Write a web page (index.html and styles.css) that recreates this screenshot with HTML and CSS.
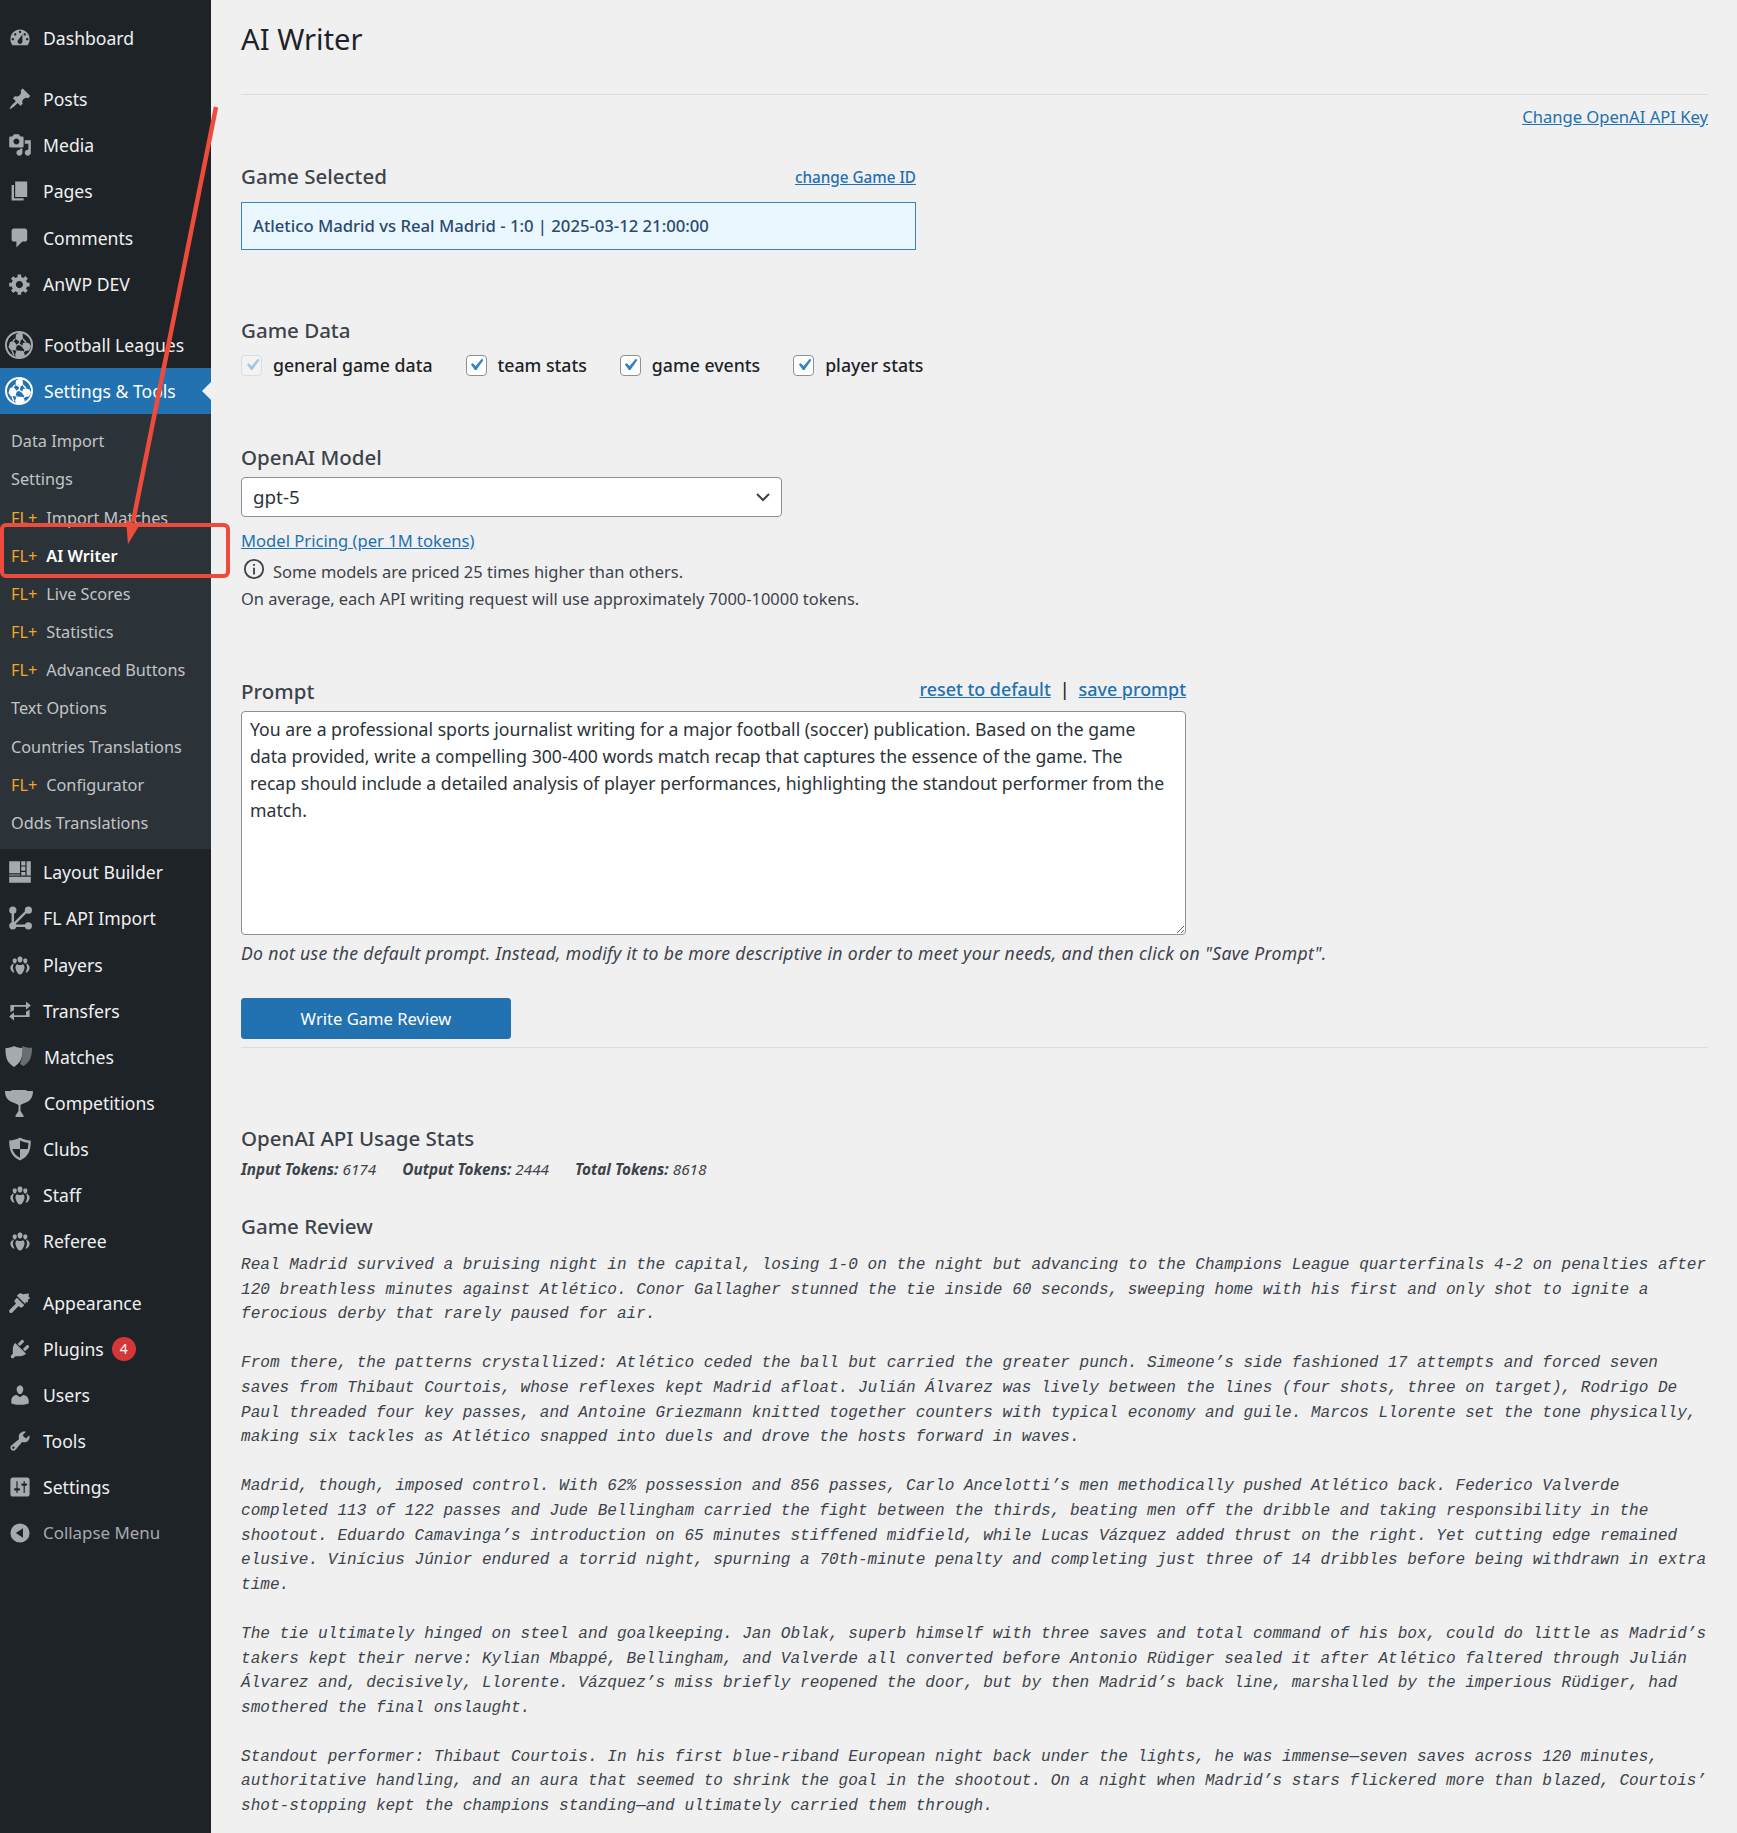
FILE: index.html
```html
<!DOCTYPE html>
<html lang="en">
  <head>
    <meta charset="UTF-8" />
    <title>AI Writer</title>
    <link rel="stylesheet" href="styles.css">
  </head>
  <body>
    <svg class="sprite" xmlns="http://www.w3.org/2000/svg">
      <symbol id="i-dashboard" viewBox="0 0 20 20"><path fill-rule="evenodd" d="M3.76 16h12.48c1.1-1.37 1.76-3.11 1.76-5 0-4.42-3.58-8-8-8s-8 3.58-8 8c0 1.89.66 3.63 1.76 5zM10 4c.55 0 1 .45 1 1s-.45 1-1 1-1-.45-1-1 .45-1 1-1zM6 6c.55 0 1 .45 1 1s-.45 1-1 1-1-.45-1-1 .45-1 1-1zm8 0c.55 0 1 .45 1 1s-.45 1-1 1-1-.45-1-1 .45-1 1-1zm-5.37 5.55L12 7v6c0 1.1-.9 2-2 2s-2-.9-2-2c0-.57.24-1.08.63-1.45zM4 10c.55 0 1 .45 1 1s-.45 1-1 1-1-.45-1-1 .45-1 1-1zm12 0c.55 0 1 .45 1 1s-.45 1-1 1-1-.45-1-1 .45-1 1-1z"/></symbol>
      <symbol id="i-post" viewBox="0 0 20 20"><path d="M10.44 3.02l1.82-1.82 6.36 6.35-1.83 1.82c-1.05-.68-2.48-.57-3.41.36l-.75.75c-.92.93-1.04 2.35-.35 3.41l-1.83 1.82-2.41-2.41-2.8 2.79c-.42.42-3.38 2.71-3.8 2.29s1.86-3.39 2.28-3.81l2.79-2.79L4.1 9.36l1.83-1.82c1.05.69 2.48.57 3.4-.36l.75-.75c.93-.92 1.05-2.35.36-3.41z"/></symbol>
      <symbol id="i-media" viewBox="0 0 20 20"><path fill-rule="evenodd" d="M13 11V4c0-.55-.45-1-1-1h-1.67L9 1H5L3.67 3H2c-.55 0-1 .45-1 1v7c0 .55.45 1 1 1h10c.55 0 1-.45 1-1zM7 4.5c1.38 0 2.5 1.12 2.5 2.5S8.38 9.5 7 9.5 4.5 8.38 4.5 7 5.62 4.5 7 4.5zM14 6h5v10.5c0 1.38-1.12 2.5-2.5 2.5S14 17.88 14 16.5s1.12-2.5 2.5-2.5c.17 0 .34.02.5.05V9h-3V6zm-4 8.05V13h2v3.5c0 1.38-1.12 2.5-2.5 2.5S7 17.88 7 16.5 8.12 14 9.5 14c.17 0 .34.02.5.05z"/></symbol>
      <symbol id="i-page" viewBox="0 0 20 20"><path d="M6 15V2h10v13H6zm-1 1h8v2H3V5h2v11z"/></symbol>
      <symbol id="i-comments" viewBox="0 0 20 20"><path d="M5 2h9c1.1 0 2 .9 2 2v7c0 1.1-.9 2-2 2h-2l-5 5v-5H5c-1.1 0-2-.9-2-2V4c0-1.1.9-2 2-2z"/></symbol>
      <symbol id="i-gear" viewBox="0 0 20 20"><path fill-rule="evenodd" d="M18 12h-2.18c-.17.7-.44 1.35-.81 1.93l1.54 1.54-2.1 2.1-1.54-1.54c-.58.36-1.23.63-1.91.79V19H8v-2.18c-.68-.16-1.33-.43-1.91-.79l-1.54 1.54-2.12-2.12 1.54-1.54c-.36-.58-.63-1.23-.79-1.91H1V9.03h2.17c.16-.7.44-1.36.8-1.94L2.43 5.55l2.1-2.1 1.54 1.54c.58-.37 1.24-.64 1.93-.81V2h3v2.18c.68.16 1.33.43 1.91.79l1.54-1.54 2.12 2.12-1.54 1.54c.36.59.64 1.24.8 1.94H18V12zm-8.5 1.5c1.66 0 3-1.34 3-3s-1.34-3-3-3-3 1.34-3 3 1.34 3 3 3z"/></symbol>
      <symbol id="i-ball" viewBox="0 0 28 28"><path fill-rule="evenodd" d="M14 0a14 14 0 1 1 0 28a14 14 0 0 1 0-28zm0 2a12 12 0 1 0 0 24a12 12 0 0 0 0-24z"/><path d="M14.500 1.500h3l.5 6-3.500 3-4-2.500 .5-4.500zM5 11l3.500-1 3.500 4-1.500 5-4.500.5-2.500-3.500zM21 11.500l3.500 1 1.500 3-2 4-4 .5-3-4 1-4zM11.500 19.500l7 .5 1.500 4.500-3 2.500h-5l-2-3z"/><path d="M15 10l-1 3 3.500 2.500M10 8l-2 2M18 8l3 3.500M12 14l2-1M10.500 19l1 .5M19 20l1 0M7 19.500l2 5" fill="none" stroke="currentColor" stroke-width="1.400"/></symbol>
      <symbol id="i-layout" viewBox="0 0 20 20"><path d="M1 1h9v10H1zM11 1h3.500v3.500H11zM15.500 1H19v12h-3.500zM11 5.500h3.500V9H11zM11 10h3.500v3H11zM1 12h9v1H1zM1 14h18v5H1z"/></symbol>
      <symbol id="i-api" viewBox="0 0 20 20"><circle cx="4" cy="3.500" r="3"/><circle cx="17" cy="3.500" r="3"/><circle cx="4" cy="16.500" r="3"/><circle cx="17" cy="16.500" r="3"/><path d="M3 4h2v12H3zM3.300 15.300L15.800 2.800l1.400 1.400L4.700 16.700zM4 15.500h13v2H4z"/></symbol>
      <symbol id="i-groups" viewBox="0 0 20 20"><path d="M8 4.500C7.700 5.800 8.600 8 10 8s2.300-2.200 2-3.500C11.800 3.500 10.900 3 10 3s-1.800.5-2 1.500zM3.900 5.800c-.2 1.100.5 3 1.700 3s1.900-1.900 1.700-3C7.100 5 6.400 4.600 5.600 4.600s-1.500.4-1.700 1.200zM12.700 5.800c-.2 1.100.5 3 1.700 3s1.900-1.900 1.700-3c-.2-.8-.9-1.200-1.700-1.200s-1.500.4-1.700 1.200z"/><path d="M7.700 9.300C6.500 9.800 6 11 6.300 12.800c.2 1.300 1.100 3.300 2 4.200.5.500 1 .9 1.700.9s1.200-.4 1.700-.9c.9-.9 1.800-2.900 2-4.200.3-1.800-.2-3-1.400-3.500-.7.500-1.400.8-2.300.8s-1.600-.3-2.300-.8zM3.700 9.500C2.400 10 1.800 11 2 12.700c.2 1.200 1.100 2.700 2 3.300.5.300 1 .4 1.500.2-.6-.9-1.100-2.200-1.300-3.300-.2-1.400 0-2.700.8-3.700-.5 0-.9-.2-1.300-.7zM16.300 9.500c1.300.5 1.900 1.500 1.700 3.200-.2 1.200-1.100 2.700-2 3.300-.5.300-1 .4-1.500.2.600-.9 1.100-2.200 1.300-3.300.2-1.400 0-2.700-.8-3.700.5 0 .9-.2 1.300-.7z"/></symbol>
      <symbol id="i-transfer" viewBox="0 0 20 20"><path d="M15 2l4 3.500L15 9V6.500H5v2.800L2 11V5h13zM5 18l-4-3.500L5 11v2.500h10v-2.800L18 9v6H5z"/></symbol>
      <symbol id="i-shields" viewBox="0 0 28 24"><path opacity=".55" d="M17 1c3 1.300 6.500 1.800 10 1.800 0 7-1 14-8.500 18.200-1.500-.6-2.500-1.400-3.500-2.200 2-4 2.500-9 2.500-14z"/><path d="M9 1c2.500 1.500 6 2 8.500 2 0 8-.5 14-8.500 19C1 17 .5 11 .5 3 3 3 6.500 2.500 9 1z"/></symbol>
      <symbol id="i-trophy" viewBox="0 0 28 28"><path d="M0 2h6l1-1h14l1 1h6c0 5-2 9-6 11-2 1-5 2-6.500 3v6l3 4.500V28H10.500v-1.500l3-4.500v-6c-1.500-1-4.500-2-6.500-3C2 11 0 7 0 2z"/></symbol>
      <symbol id="i-shield" viewBox="0 0 20 20"><path fill-rule="evenodd" d="M10 .5c2.500 1.500 5.500 2.300 9 2.500 0 7.500-1.500 13.500-9 16.500C2.500 16.500 1 10.500 1 3c3.500-.2 6.500-1 9-2.500zM10 3v7h6.400c.4-1.700.5-3.400.6-5.100C14.200 4.600 12 4 10 3zM10 10H3.600c.9 3.100 2.700 5.400 6.400 7.200z"/></symbol>
      <symbol id="i-brush" viewBox="0 0 20 20"><path d="M14.500 11L7.400 4l1.500-1.500c.5-.6 1.500-.9 2.300-.5l1.300.7 5-.7-.4 2.800 1.400 1-2 1.600.2 2-2.200-.1zM13.600 11.900l-1.500 1.500c-.7.600-1.800.6-2.400 0L8.800 12.600 3.600 17.900c-.6.600-1.600.6-2.200 0s-.6-1.600 0-2.200l5.300-5.200-.8-.9c-.7-.7-.6-1.800 0-2.400l1.500-1.500z"/></symbol>
      <symbol id="i-plugin" viewBox="0 0 20 20"><path d="M13.110 4.360L9.870 7.600 8 5.730l3.240-3.240c.35-.34 1.050-.2 1.560.32.52.51.66 1.210.31 1.550zm-8 1.770l.91-1.120 9.010 9.010-1.190.84c-.71.71-2.630 1.160-3.820 1.160H6.140L4.900 17.260c-.59.59-1.540.59-2.120 0-.59-.58-.59-1.530 0-2.120l1.240-1.240v-3.880c0-1.130.52-3.070 1.090-3.890zm7.260 3.970l3.240-3.240c.34-.35 1.040-.21 1.550.31.52.51.66 1.210.31 1.550l-3.240 3.250z"/></symbol>
      <symbol id="i-users" viewBox="0 0 20 20"><path d="M10 9.250c-2.270 0-2.730-3.440-2.730-3.440C7 4.020 7.820 2 9.970 2c2.160 0 2.980 2.020 2.710 3.810 0 0-.41 3.440-2.680 3.440zm0 2.570L12.720 10c2.390 0 4.520 2.330 4.520 4.530v2.490s-3.650 1.130-7.240 1.130c-3.650 0-7.240-1.130-7.240-1.130v-2.490c0-2.250 1.940-4.480 4.470-4.480z"/></symbol>
      <symbol id="i-tools" viewBox="0 0 20 20"><path fill-rule="evenodd" d="M16.680 9.770c-1.340 1.340-3.300 1.670-4.950.99l-5.410 6.520c-.99.99-2.590.99-3.580 0s-.99-2.590 0-3.570l6.520-5.420c-.68-1.650-.35-3.610.99-4.950 1.280-1.280 3.120-1.620 4.720-1.060l-2.890 2.890 2.820 2.820 2.860-2.870c.53 1.580.18 3.390-1.080 4.650zM3.810 16.210c.4.39 1.030.39 1.420 0 .4-.4.4-1.030 0-1.430-.39-.39-1.020-.39-1.420 0-.39.4-.39 1.030 0 1.430z"/></symbol>
      <symbol id="i-settings" viewBox="0 0 20 20"><path fill-rule="evenodd" d="M18 16V4c0-1.100-.9-2-2-2H4c-1.100 0-2 .9-2 2v12c0 1.100.9 2 2 2h12c1.100 0 2-.9 2-2zM8 11h1c.55 0 1 .45 1 1s-.45 1-1 1H8v1.500c0 .28-.22.5-.5.5s-.5-.22-.5-.5V13H6c-.55 0-1-.45-1-1s.45-1 1-1h1V5.500c0-.28.22-.5.5-.5s.5.22.5.5V11zm5-2h-1c-.55 0-1-.45-1-1s.45-1 1-1h1V5.500c0-.28.22-.5.5-.5s.5.22.5.5V7h1c.55 0 1 .45 1 1s-.45 1-1 1h-1v5.500c0 .28-.22.5-.5.5s-.5-.22-.5-.5V9z"/></symbol>
      <symbol id="i-collapse" viewBox="0 0 20 20"><path fill-rule="evenodd" d="M10 2a8 8 0 1 1 0 16a8 8 0 0 1 0-16zM12.500 6L6.500 10l6 4z"/></symbol>
      <symbol id="i-check" viewBox="0 0 20 20"><path d="M14.830 4.890l1.340.94-5.810 8.380H9.020L5.780 9.670l1.340-1.250 2.570 2.400z"/></symbol>
    </svg>

    <div class="wrap">
      <aside class="sidebar">
        <ul class="menu">
          <li class="item"><svg class="icon"><use href="#i-dashboard"/></svg>Dashboard</li>
          <li class="item sep"><svg class="icon"><use href="#i-post"/></svg>Posts</li>
          <li class="item"><svg class="icon"><use href="#i-media"/></svg>Media</li>
          <li class="item"><svg class="icon"><use href="#i-page"/></svg>Pages</li>
          <li class="item"><svg class="icon"><use href="#i-comments"/></svg>Comments</li>
          <li class="item"><svg class="icon"><use href="#i-gear"/></svg>AnWP DEV</li>
          <li class="item sep"><svg class="icon icon-big"><use href="#i-ball"/></svg>Football Leagues</li>
          <li class="item active"><svg class="icon icon-big"><use href="#i-ball"/></svg>Settings &amp; Tools</li>
        </ul>
        <ul class="submenu">
          <li>Data Import</li>
          <li>Settings</li>
          <li><span class="fl">FL+</span>Import Matches</li>
          <li class="current"><span class="fl">FL+</span>AI Writer</li>
          <li><span class="fl">FL+</span>Live Scores</li>
          <li><span class="fl">FL+</span>Statistics</li>
          <li><span class="fl">FL+</span>Advanced Buttons</li>
          <li>Text Options</li>
          <li>Countries Translations</li>
          <li><span class="fl">FL+</span>Configurator</li>
          <li>Odds Translations</li>
        </ul>
        <ul class="menu">
          <li class="item"><svg class="icon"><use href="#i-layout"/></svg>Layout Builder</li>
          <li class="item"><svg class="icon"><use href="#i-api"/></svg>FL API Import</li>
          <li class="item"><svg class="icon"><use href="#i-groups"/></svg>Players</li>
          <li class="item"><svg class="icon"><use href="#i-transfer"/></svg>Transfers</li>
          <li class="item"><svg class="icon icon-big"><use href="#i-shields"/></svg>Matches</li>
          <li class="item"><svg class="icon icon-big"><use href="#i-trophy"/></svg>Competitions</li>
          <li class="item"><svg class="icon"><use href="#i-shield"/></svg>Clubs</li>
          <li class="item"><svg class="icon"><use href="#i-groups"/></svg>Staff</li>
          <li class="item"><svg class="icon"><use href="#i-groups"/></svg>Referee</li>
          <li class="item sep"><svg class="icon"><use href="#i-brush"/></svg>Appearance</li>
          <li class="item"><svg class="icon"><use href="#i-plugin"/></svg>Plugins<span class="badge">4</span></li>
          <li class="item"><svg class="icon"><use href="#i-users"/></svg>Users</li>
          <li class="item"><svg class="icon"><use href="#i-tools"/></svg>Tools</li>
          <li class="item"><svg class="icon"><use href="#i-settings"/></svg>Settings</li>
          <li class="item collapse"><svg class="icon"><use href="#i-collapse"/></svg>Collapse Menu</li>
        </ul>
      </aside>

      <main class="content">
        <h1>AI Writer</h1>
        <hr />
        <div class="top-link"><a href="#">Change OpenAI API Key</a></div>

        <div class="head-row game-head">
          <h2>Game Selected</h2>
          <a href="#" class="small-link">change Game ID</a>
        </div>
        <div class="game-box">Atletico Madrid vs Real Madrid - 1:0 | 2025-03-12 21:00:00</div>

        <h2 class="block">Game Data</h2>
        <div class="checks">
          <label class="check disabled"><span class="box"><svg><use href="#i-check"/></svg></span>general game data</label>
          <label class="check"><span class="box"><svg><use href="#i-check"/></svg></span>team stats</label>
          <label class="check"><span class="box"><svg><use href="#i-check"/></svg></span>game events</label>
          <label class="check"><span class="box"><svg><use href="#i-check"/></svg></span>player stats</label>
        </div>

        <h2 class="block">OpenAI Model</h2>
        <select class="model"><option>gpt-5</option></select>
        <div class="pricing"><a href="#">Model Pricing (per 1M tokens)</a></div>
        <div class="info">
          <svg class="info-icon" viewBox="0 0 24 24"><circle cx="12" cy="12" r="10" fill="none" stroke="#3c434a" stroke-width="2"/><path d="M11 10.500h2V18h-2zM11 6.500h2v2h-2z" fill="#3c434a"/></svg>
          Some models are priced 25 times higher than others.
        </div>
        <div class="avg">On average, each API writing request will use approximately 7000-10000 tokens.</div>

        <div class="head-row prompt-head">
          <h2>Prompt</h2>
          <div class="prompt-links"><a href="#">reset to default</a><span class="bar">|</span><a href="#">save prompt</a></div>
        </div>
        <textarea class="prompt" readonly>You are a professional sports journalist writing for a major football (soccer) publication. Based on the game data provided, write a compelling 300-400 words match recap that captures the essence of the game. The recap should include a detailed analysis of player performances, highlighting the standout performer from the match.</textarea>
        <div class="note">Do not use the default prompt. Instead, modify it to be more descriptive in order to meet your needs, and then click on "Save Prompt".</div>
        <button class="btn">Write Game Review</button>
        <hr class="line-2" />

        <h2 class="usage">OpenAI API Usage Stats</h2>
        <div class="stats">
          <span><b>Input Tokens:</b> 6174</span>
          <span><b>Output Tokens:</b> 2444</span>
          <span><b>Total Tokens:</b> 8618</span>
        </div>

        <h2 class="review-head">Game Review</h2>
        <div class="review">
          <p>Real Madrid survived a bruising night in the capital, losing 1-0 on the night but advancing to the Champions League quarterfinals 4-2 on penalties after
120 breathless minutes against Atlético. Conor Gallagher stunned the tie inside 60 seconds, sweeping home with his first and only shot to ignite a
ferocious derby that rarely paused for air.</p>
          <p>From there, the patterns crystallized: Atlético ceded the ball but carried the greater punch. Simeone’s side fashioned 17 attempts and forced seven
saves from Thibaut Courtois, whose reflexes kept Madrid afloat. Julián Álvarez was lively between the lines (four shots, three on target), Rodrigo De
Paul threaded four key passes, and Antoine Griezmann knitted together counters with typical economy and guile. Marcos Llorente set the tone physically,
making six tackles as Atlético snapped into duels and drove the hosts forward in waves.</p>
          <p>Madrid, though, imposed control. With 62% possession and 856 passes, Carlo Ancelotti’s men methodically pushed Atlético back. Federico Valverde
completed 113 of 122 passes and Jude Bellingham carried the fight between the thirds, beating men off the dribble and taking responsibility in the
shootout. Eduardo Camavinga’s introduction on 65 minutes stiffened midfield, while Lucas Vázquez added thrust on the right. Yet cutting edge remained
elusive. Vinícius Júnior endured a torrid night, spurning a 70th-minute penalty and completing just three of 14 dribbles before being withdrawn in extra
time.</p>
          <p>The tie ultimately hinged on steel and goalkeeping. Jan Oblak, superb himself with three saves and total command of his box, could do little as Madrid’s
takers kept their nerve: Kylian Mbappé, Bellingham, and Valverde all converted before Antonio Rüdiger sealed it after Atlético faltered through Julián
Álvarez and, decisively, Llorente. Vázquez’s miss briefly reopened the door, but by then Madrid’s back line, marshalled by the imperious Rüdiger, had
smothered the final onslaught.</p>
          <p>Standout performer: Thibaut Courtois. In his first blue-riband European night back under the lights, he was immense—seven saves across 120 minutes,
authoritative handling, and an aura that seemed to shrink the goal in the shootout. On a night when Madrid’s stars flickered more than blazed, Courtois’
shot-stopping kept the champions standing—and ultimately carried them through.</p>
        </div>
      </main>
    </div>

    <!-- annotation drawn on top of the screenshot -->
    <svg class="annotation" viewBox="0 0 240 600">
      <rect x="2" y="525" width="226" height="51" rx="4" fill="none" stroke="#ee4b3d" stroke-width="4"/>
      <path d="M216 107L133 522" fill="none" stroke="#ee4b3d" stroke-width="4.5"/>
      <path d="M128 544L142 521L135 524L126 520z" fill="#ee4b3d"/>
    </svg>
  </body>
</html>
```
FILE: styles.css
```css
html,
body {
  height: 1833px;
  overflow: hidden;
}
body {
  margin: 0;
  background-color: #f0f0f1;
  font-family: "Noto Sans", sans-serif;
  font-size: 16.6px;
  line-height: 24px;
  color: #3c434a;
}
a {
  color: #2271b1;
}
h1,
h2,
p,
ul {
  margin: 0;
  padding: 0;
}
.sprite {
  display: none;
}
.wrap {
  display: flex;
  height: 100%;
}

/* sidebar */
.sidebar {
  flex: 0 0 211px;
  padding-top: 15px;
  background-color: #1d2327;
}
.menu,
.submenu {
  list-style: none;
}
.item {
  position: relative;
  display: flex;
  align-items: center;
  height: 46.15px;
  padding-left: 8px;
  font-size: 17.6px;
  color: #f0f0f1;
  white-space: nowrap;
}
.item.sep {
  margin-top: 15px;
}
.item.active {
  background-color: #2271b1;
  color: #fff;
}
.item.active .icon {
  fill: #fff;
  color: #fff;
}
.item.active::after {
  content: "";
  position: absolute;
  right: 0;
  top: 14px;
  border: 9px solid transparent;
  border-right-color: #f0f0f1;
  border-left-width: 0;
}
.item.collapse {
  font-size: 16.9px;
  color: #a7aaad;
}
.icon {
  flex: 0 0 24px;
  width: 24px;
  height: 24px;
  margin-right: 11px;
  fill: #a7aaad;
  color: #a7aaad;
}
.icon-big {
  flex-basis: 28px;
  width: 28px;
  height: 28px;
  margin: 0 11px 0 -3px;
}
.badge {
  display: inline-block;
  width: 24px;
  height: 24px;
  margin-left: 8px;
  border-radius: 50%;
  background-color: #d63638;
  color: #fff;
  font-size: 14px;
  line-height: 24px;
  text-align: center;
}
.submenu {
  padding: 8px 0 7px;
  background-color: #2c3338;
}
.submenu li {
  height: 38.2px;
  padding-left: 11px;
  font-size: 16.25px;
  line-height: 38.2px;
  color: #c3c4c7;
  white-space: nowrap;
}
.submenu li.current {
  color: #fff;
  font-weight: 600;
}
.fl {
  margin-right: 9px;
  color: #f5a623;
  font-weight: 400;
}

/* main column */
.content {
  flex: 1;
  min-width: 0;
  padding: 19px 29px 0 30px;
}
h1 {
  margin-bottom: 35px;
  font-size: 29.2px;
  font-weight: 400;
  line-height: 40px;
  color: #1d2327;
}
hr {
  height: 1px;
  margin: 0;
  border: 0;
  background-color: #dcdcde;
}
.top-link {
  margin-top: 10px;
  text-align: right;
}
h2 {
  padding-bottom: 2px;
  font-size: 20.5px;
  font-weight: 500;
  line-height: 26px;
  color: #3c434a;
}
h2.block {
  margin-top: 67px;
}
.head-row {
  display: flex;
  justify-content: space-between;
  align-items: center;
}
.game-head {
  width: 675px;
  margin-top: 34px;
}
.small-link {
  font-size: 15.25px;
  font-weight: 500;
}
.game-box {
  box-sizing: border-box;
  width: 675px;
  height: 48px;
  margin-top: 11px;
  padding: 0 11px;
  border: 1px solid #3582c4;
  background-color: #ebf7ff;
  font-size: 16.67px;
  font-weight: 500;
  line-height: 46px;
  color: #2a4a6d;
}
.checks {
  display: flex;
  margin-top: 8px;
  height: 24px;
}
.check {
  display: flex;
  align-items: center;
  margin-right: 33px;
  font-size: 17.7px;
  font-weight: 500;
  color: #1d2327;
}
.box {
  display: flex;
  align-items: center;
  justify-content: center;
  box-sizing: border-box;
  width: 21px;
  height: 21px;
  margin-right: 11px;
  border: 1px solid #8c8f94;
  border-radius: 4px;
  background-color: #fff;
  fill: #3582c4;
}
.box svg {
  width: 24px;
  height: 24px;
  flex: none;
}
.check.disabled .box {
  border-color: #dcdcde;
  background-color: #f3f3f4;
  fill: #a4c6e3;
}
.model {
  display: block;
  box-sizing: border-box;
  width: 541px;
  height: 40px;
  margin-top: 5px;
  padding: 0 32px 0 11px;
  border: 1px solid #8c8f94;
  border-radius: 4px;
  background: #fff url("data:image/svg+xml,%3Csvg xmlns='http://www.w3.org/2000/svg' width='20' height='20' viewBox='0 0 20 20'%3E%3Cpath d='M4 7l6 6 6-6' fill='none' stroke='%233c434a' stroke-width='2'/%3E%3C/svg%3E") no-repeat right 8px center;
  font-family: inherit;
  font-size: 18.8px;
  color: #2c3338;
  appearance: none;
}
.pricing {
  margin-top: 12px;
}
.info {
  display: flex;
  align-items: center;
  margin-top: 7px;
  font-size: 16.45px;
}
.info-icon {
  width: 22px;
  height: 22px;
  margin: -6px 8px 0 2px;
}
.avg {
  margin-top: 3px;
  font-size: 16.45px;
}
.prompt-head {
  width: 945px;
  margin-top: 67px;
}
.prompt-links {
  margin-top: -6px;
  font-size: 17.9px;
  font-weight: 500;
}
.bar {
  margin: 0 9px;
  color: #1d2327;
}
.prompt {
  display: block;
  box-sizing: border-box;
  width: 945px;
  height: 224px;
  margin-top: 5px;
  padding: 4px 14px 4px 8px;
  border: 1px solid #8c8f94;
  border-radius: 4px;
  background-color: #fff;
  font-family: inherit;
  font-size: 17.65px;
  line-height: 27px;
  color: #2c3338;
  outline: none;
}
.note {
  margin-top: 6px;
  font-size: 17.6px;
  font-style: italic;
  letter-spacing: 0.33px;
  white-space: nowrap;
}
.btn {
  display: block;
  width: 270px;
  height: 41px;
  margin-top: 33px;
  border: 1px solid #2271b1;
  border-radius: 3px;
  background-color: #2271b1;
  font-family: inherit;
  font-size: 16.6px;
  color: #fff;
}
.line-2 {
  margin-top: 8px;
}
.usage {
  margin-top: 77px;
}
.stats {
  display: flex;
  gap: 26px;
  margin-top: 6px;
  font-size: 15.3px;
  font-style: italic;
  line-height: 20px;
}
.review-head {
  margin-top: 34px;
}
.review {
  margin-top: 12px;
  font-family: "Liberation Mono", monospace;
  font-size: 16.07px;
  font-style: italic;
  line-height: 24.6px;
}
.review p {
  margin-bottom: 24.6px;
  white-space: pre;
}

/* red marker over the menu */
.annotation {
  position: absolute;
  left: 0;
  top: 0;
  width: 240px;
  height: 600px;
  pointer-events: none;
}
```
